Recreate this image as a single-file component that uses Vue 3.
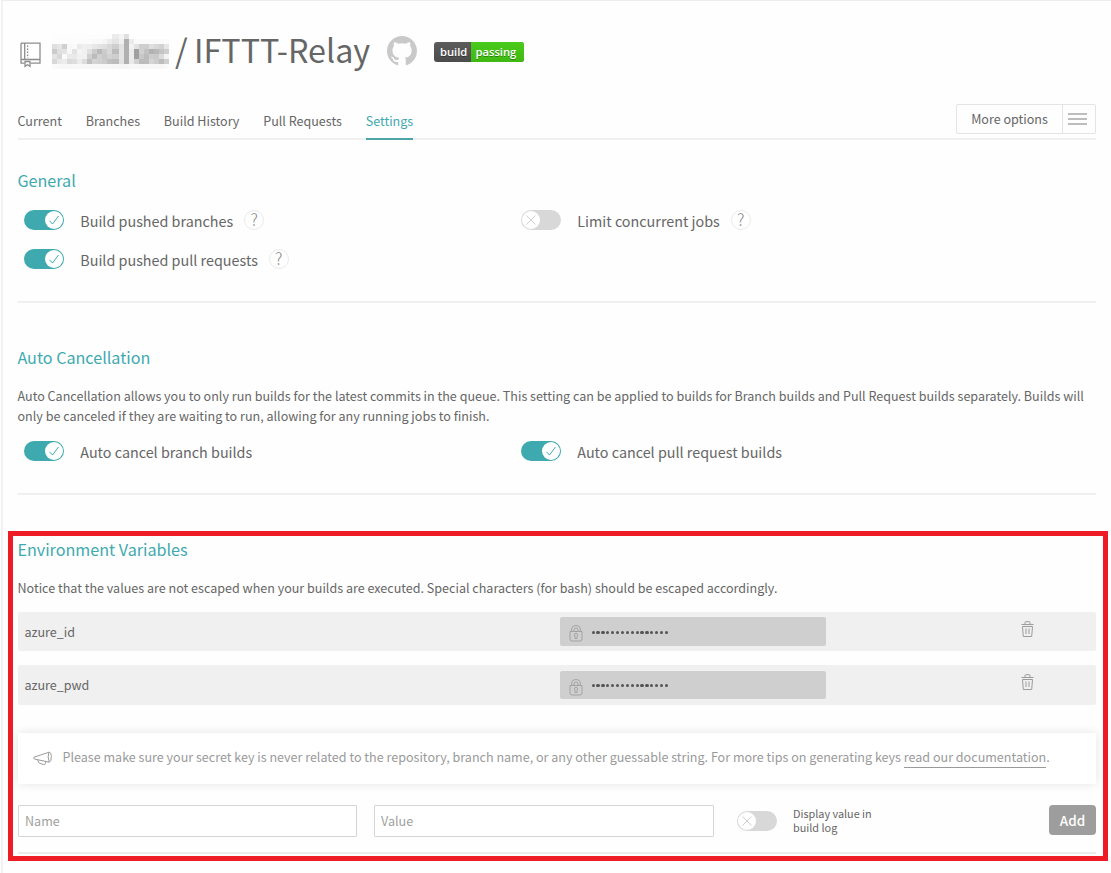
<script setup>
import { ref } from 'vue'

const tabs = ['Current', 'Branches', 'Build History', 'Pull Requests', 'Settings']
const activeTab = ref('Settings')

const general = [
  [
    { label: 'Build pushed branches', on: true, help: true },
    { label: 'Limit concurrent jobs', on: false, help: true }
  ],
  [{ label: 'Build pushed pull requests', on: true, help: true }]
]
const cancellation = [
  [
    { label: 'Auto cancel branch builds', on: true },
    { label: 'Auto cancel pull request builds', on: true }
  ]
]
const variables = ['azure_id', 'azure_pwd']

// Two hex digits per cell, each the grey level of one mosaic tile of the hidden owner name.
const mosaic = [
  'fdfdfdfdfdfdfdfdfdfdfdfcebf4e0fdfefefefefefefe',
  'fdfdfdfcfcfbfbfbf9f9f5ece4f0b0eafafafafafafafb',
  'dfe6d0f8faeaefeee8e3dfd8cee2b0f2e2cfceded8d2e6',
  'cbe0e4f8e3f5f0e0ccb9cbd8bce4b0eca0d0c2b2b8c4ce',
  'e4d8faeaeaf1f2d0bcd0c8d2cee4b0eca0c8bccccadcf4',
  'd8e8ecdadeecdcc0d4d0ccc0bce2b0ead2bcbcd4ccbcd0',
  'faf8f7f7f8f8f7f7f7f7f7f7f7f5f5f8f8f7f7f7f7f7fa'
].map(row => row.match(/../g))
</script>

<template>
  <div class="page">
    <header class="title">
      <svg class="repo" viewBox="0 0 22 26" fill="none" stroke="#8d8d8d" stroke-width="1.3">
        <path d="M1 1.2h19v20h-9.500M4.500 21.200H1v-20M1 17.500h19M4.700 1.200v16" />
        <path d="M7.600 3.500v12.500" stroke-dasharray="1.500 1.500" />
        <path d="M5 19.500h5v4.800l-2.500-1.600L5 24.300z" />
      </svg>
      <div class="owner">
        <template v-for="(row, y) in mosaic" :key="y">
          <i v-for="(cell, x) in row" :key="x" :style="{ background: '#' + cell + cell + cell }"></i>
        </template>
      </div>
      <h1><span class="slash">/</span><span class="name">IFTTT-Relay</span></h1>
      <svg class="github" viewBox="0 0 16 16" fill="#c9c9c9">
        <path d="M8 0C3.580 0 0 3.580 0 8c0 3.540 2.290 6.530 5.470 7.590.4.070.55-.17.55-.38 0-.19-.01-.82-.01-1.490-2.010.37-2.530-.49-2.690-.94-.09-.23-.48-.94-.82-1.130-.28-.15-.68-.52-.01-.53.63-.01 1.080.58 1.230.82.72 1.210 1.870.87 2.330.66.07-.52.28-.87.51-1.070-1.780-.2-3.640-.89-3.640-3.950 0-.87.31-1.590.82-2.150-.08-.2-.36-1.020.08-2.120 0 0 .67-.21 2.200.82.64-.18 1.320-.27 2-.27s1.360.09 2 .27c1.530-1.040 2.200-.82 2.200-.82.44 1.100.16 1.920.08 2.120.51.56.82 1.270.82 2.150 0 3.070-1.870 3.750-3.650 3.950.29.25.54.73.54 1.480 0 1.070-.01 1.930-.01 2.200 0 .21.15.46.55.38A8.010 8.010 0 0 0 16 8c0-4.420-3.580-8-8-8z" />
      </svg>
      <div class="badge"><span>build</span><span class="ok">passing</span></div>
    </header>

    <nav class="tabs">
      <a v-for="t in tabs" :key="t" :class="{ active: t === activeTab }">{{ t }}</a>
      <button class="more"><span>More options</span><b><i></i><i></i><i></i></b></button>
    </nav>

    <section class="general">
      <h2>General</h2>
      <div v-for="(row, i) in general" :key="i" class="row">
        <div v-for="o in row" :key="o.label" class="option">
          <span class="toggle" :class="{ on: o.on }">
            <svg viewBox="0 0 18 18" fill="none"><path :d="o.on ? 'M4.500 9.800l3 3.200 6-8' : 'M4.500 4.500l9 9M13.500 4.500l-9 9'" /></svg>
          </span>
          <span class="label">{{ o.label }}</span>
          <span v-if="o.help" class="help">?</span>
        </div>
      </div>
    </section>

    <section class="cancel">
      <h2>Auto Cancellation</h2>
      <p>Auto Cancellation allows you to only run builds for the latest commits in the queue. This setting can be applied to builds for Branch builds and Pull Request builds separately. Builds will<br>only be canceled if they are waiting to run, allowing for any running jobs to finish.</p>
      <div v-for="(row, i) in cancellation" :key="i" class="row">
        <div v-for="o in row" :key="o.label" class="option">
          <span class="toggle on">
            <svg viewBox="0 0 18 18" fill="none"><path d="M4.500 9.800l3 3.200 6-8" /></svg>
          </span>
          <span class="label">{{ o.label }}</span>
        </div>
      </div>
    </section>

    <section class="env">
      <h2>Environment Variables</h2>
      <p>Notice that the values are not escaped when your builds are executed. Special characters (for bash) should be escaped accordingly.</p>
      <div v-for="v in variables" :key="v" class="variable">
        <span class="key">{{ v }}</span>
        <span class="secret">
          <svg class="lock" viewBox="0 0 14 17" fill="none" stroke="#a3a3a3">
            <path d="M1 6.500h12v7.500q0 2-2 2H3q-2 0-2-2zM2.600 6.500V5q0-4.400 4.400-4.400T11.400 5v1.500M5 6.500V5q0-2 2-2t2 2v1.500" />
            <path d="M6 13.500v-2.300a1.600 1.600 0 1 1 2 0v2.300z" />
          </svg>
          <span class="dots"><i v-for="n in 16" :key="n"></i></span>
        </span>
        <svg class="trash" viewBox="0 0 13 17" fill="none" stroke="#9c9c9c">
          <path d="M.5 3.500h12M4 3.500v-2q0-.8.8-.8h3.400q.8 0 .8.8v2M1.500 5.500h10l-.8 10h-8.400zM5 7.500v5.500M8 7.500v5.500" />
        </svg>
      </div>
      <div class="notice">
        <svg viewBox="0 0 20 16" fill="none" stroke="#9a9a9a">
          <path d="M.9 6.200L15.800 1.300q2.400-.5 2.500 4.300t-2 5.600L1.400 8q-1.300-1-.5-1.800zM15.800 1.300q-1.600 4.500.5 9.900M4.800 8.800l.6 2.200q.3 1 1.300 1.300l4 1.300q1.200.3 1.500-.8l.7-2.200" />
        </svg>
        <span>Please make sure your secret key is never related to the repository, branch name, or any other guessable string. For more tips on generating keys <a>read our documentation</a>.</span>
      </div>
      <form class="add" @submit.prevent>
        <input placeholder="Name">
        <input placeholder="Value">
        <span class="toggle">
          <svg viewBox="0 0 18 18" fill="none"><path d="M4.500 4.500l9 9M13.500 4.500l-9 9" /></svg>
        </span>
        <label>Display value in<br>build log</label>
        <button>Add</button>
      </form>
    </section>
    <div class="highlight"></div>
  </div>
</template>

<style>
body { margin: 0; background: #fefefe; }
</style>

<style scoped>
* { box-sizing: border-box; }
.page {
  position: relative;
  width: 1110px;
  height: 873px;
  margin-left: 1px;
  padding: 0 15px 0 15px;
  overflow: hidden;
  background: #fefefe;
  border-top: 1px solid #ededed;
  border-left: 2px solid #f2f2f2;
  font: 12.550px/20px "Noto Sans CJK SC", "Noto Sans", sans-serif;
  color: #666;
}
.title { display: flex; height: 103px; }
.repo { width: 22px; height: 26px; margin: 41px 0 0 2px; }
.owner {
  display: grid;
  grid-template-columns: repeat(12, 5px) 7px repeat(10, 5px);
  grid-template-rows: repeat(7, 5px);
  width: 117px;
  height: 35px;
  margin: 33px 0 0 10px;
}
h1 { display: flex; margin: 24px 0 0; font-size: 32.300px; line-height: 48px; font-weight: 400; }
.slash { width: 25px; padding-left: 6px; }
.name { width: 175px; white-space: nowrap; }
.github { width: 30px; height: 30px; margin: 35px 0 0 18px; }
.badge {
  display: flex;
  width: 90px;
  height: 20px;
  margin: 41px 0 0 17px;
  border-radius: 3px;
  overflow: hidden;
  background: linear-gradient(#5c5c5c, #4b4b4b);
  color: #fff;
  font: 600 11.200px/20px "Open Sans", sans-serif;
  text-shadow: 0 1px #0005;
}
.badge span { width: 37px; padding-left: 6px; }
.badge .ok { width: 53px; padding-left: 4.500px; background: linear-gradient(#4acb1c, #3fb912); }

.tabs { display: flex; height: 36px; border-bottom: 2px solid #f0f0f0; }
.tabs a { height: 36px; margin-right: 24.300px; padding-top: 7px; white-space: nowrap; text-indent: -.5px; }
.tabs .active { color: #3eaaaf; border-bottom: 2px solid #4ba5a5; }
.more {
  display: flex;
  width: 140px;
  height: 30px;
  margin-left: auto;
  padding: 0;
  border: 1px solid #e4e4e4;
  border-radius: 2px;
  background: none;
  font: inherit;
  line-height: 28px;
  color: inherit;
}
.more span { width: 106px; border-right: 1px solid #e4e4e4; height: 28px; }
.more b { display: flex; flex-direction: column; gap: 3px; padding: 8px 0 0 5px; }
.more i { width: 19px; height: 2px; background: #bdbdbd; }

h2 { margin: 0; font-size: 16.150px; line-height: 24px; font-weight: 400; color: #3eaaaf; text-indent: -.6px; }
p { margin: 0 0 0 -.5px; white-space: nowrap; }
.general { height: 163px; padding-top: 28px; border-bottom: 2px solid #f0f0f0; }
.row { display: flex; height: 39px; padding-left: 6px; }
.general h2 { margin-bottom: 18px; }
.option { display: flex; width: 497px; height: 22px; }
.toggle { display: block; flex: none; width: 40px; height: 20px; border-radius: 10px; background: #d8d8d8; padding: 1px; }
.toggle.on { background: #3eaaaf; padding-left: 21px; }
.toggle svg { display: block; width: 18px; height: 18px; border-radius: 9px; background: #fff; stroke: #d0d0d0; }
.toggle.on svg { stroke: #3eaaaf; }
.label { margin-left: 16.300px; font-size: 14.350px; line-height: 22px; white-space: nowrap; }
.help { width: 20px; height: 20px; margin-left: 11px; border: 1px solid #ebebeb; border-radius: 50%; text-align: center; font-size: 16.500px; line-height: 16px; font-weight: 300; color: #888; }

.cancel { height: 192px; padding-top: 42px; border-bottom: 2px solid #f0f0f0; }
.cancel p { margin-top: 17px; margin-bottom: 15px; }

.env { height: 359px; padding-top: 42px; border-bottom: 2px solid #ececec; }
.env p { margin-top: 17px; margin-bottom: 14px; }
.variable { display: flex; height: 39px; margin-bottom: 14px; padding-left: 6.500px; background: #f0f0f0; border-radius: 2px; }
.variable + .variable { height: 40px; }
.key { width: 535.500px; line-height: 39px; }
.secret { display: flex; width: 266px; height: 29px; margin-top: 5px; padding-left: 9px; border-radius: 2px; background: #cfcfcf; }
.variable + .variable .secret { height: 28px; margin-top: 6px; }
.lock { width: 14px; height: 17px; margin-top: 8px; }
.dots { display: flex; gap: 1.600px; margin: 13.500px 0 0 8.500px; }
.variable + .variable .dots { margin-top: 12.500px; }
.dots i { width: 3.300px; height: 3.500px; border-radius: 50%; background: #555; }
.trash { width: 13px; height: 17px; margin: 9px 0 0 195px; }
.notice { display: flex; height: 51px; margin-top: 28px; padding: 15px 0 0 15px; background: #fff; box-shadow: 0 0 10px #0000001a; color: #9a9a9a; white-space: nowrap; line-height: 17px; }
.notice svg { width: 20px; height: 16px; margin: 3px 9.500px 0 0; }
.notice a { padding-bottom: 1px; border-bottom: 1px solid #9a9a9a; }
.add { display: flex; margin-top: 21px; }
input { width: 339px; height: 32px; margin-right: 17px; padding: 0 6px 1px; border: 1px solid #d5d5d5; border-radius: 1px; background: #fff; font: inherit; }
input + input { width: 340px; margin-right: 16px; }
input::placeholder { color: #a0a0a0; opacity: 1; }
.add .toggle { margin: 6px 0 0 7px; }
.add label { margin: 1px 0 0 16px; font-size: 10.850px; line-height: 14px; }
.add button { width: 47px; height: 30px; margin-left: auto; padding: 0; border: 0; border-radius: 4px; background: #9d9d9d; color: #fff; font: 500 13.500px/28px "Noto Sans CJK SC", sans-serif; }
.highlight { position: absolute; left: 5px; top: 530px; width: 1100px; height: 330px; border: 5px solid #ed1c24; }
</style>
